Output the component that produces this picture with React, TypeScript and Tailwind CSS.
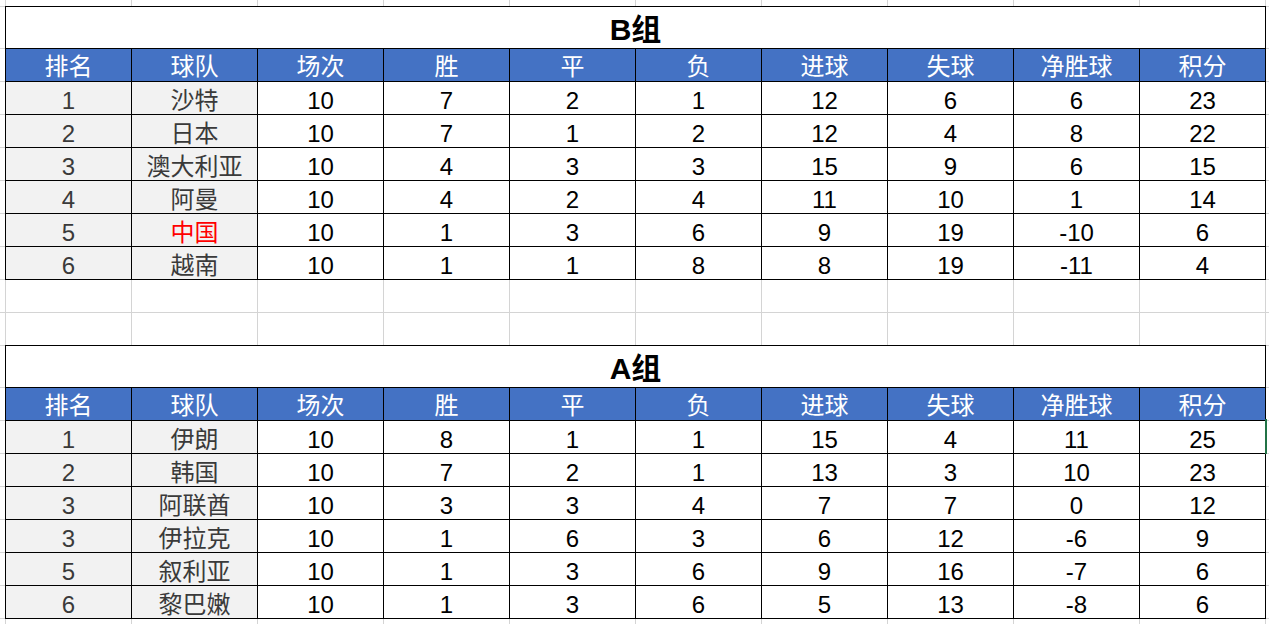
import React from "react";

const HEAD = ["排名", "球队", "场次", "胜", "平", "负", "进球", "失球", "净胜球", "积分"];

type Row = (string | number)[];

const B: Row[] = [
  [1, "沙特", 10, 7, 2, 1, 12, 6, 6, 23],
  [2, "日本", 10, 7, 1, 2, 12, 4, 8, 22],
  [3, "澳大利亚", 10, 4, 3, 3, 15, 9, 6, 15],
  [4, "阿曼", 10, 4, 2, 4, 11, 10, 1, 14],
  [5, "中国", 10, 1, 3, 6, 9, 19, -10, 6],
  [6, "越南", 10, 1, 1, 8, 8, 19, -11, 4],
];

const A: Row[] = [
  [1, "伊朗", 10, 8, 1, 1, 15, 4, 11, 25],
  [2, "韩国", 10, 7, 2, 1, 13, 3, 10, 23],
  [3, "阿联酋", 10, 3, 3, 4, 7, 7, 0, 12],
  [3, "伊拉克", 10, 1, 6, 3, 6, 12, -6, 9],
  [5, "叙利亚", 10, 1, 3, 6, 9, 16, -7, 6],
  [6, "黎巴嫩", 10, 1, 3, 6, 5, 13, -8, 6],
];

const COLS = [0, 1, 2, 3, 4, 5, 6, 7, 8, 9];

function GridBand({ h, bottom }: { h: string; bottom?: boolean }) {
  return (
    <div className={`flex ${h} ${bottom ? "border-b border-[#d4d4d4]" : ""} box-content`}>
      <div className="w-[5px] shrink-0" />
      {COLS.map((i) => (
        <div key={i} className="w-[126px] shrink-0 border-l border-[#d4d4d4]" />
      ))}
      <div className="w-[4px] shrink-0 border-l border-[#d4d4d4]" />
    </div>
  );
}

function SideStrip({ w }: { w: string }) {
  const heights = ["h-[42px]", "h-[33px]", "h-[33px]", "h-[33px]", "h-[33px]", "h-[33px]", "h-[33px]", "h-[33px]"];
  return (
    <div className={`${w} shrink-0 flex flex-col`}>
      {heights.map((hh, i) => (
        <div key={i} className={`${hh} border-t border-[#d4d4d4] ${i === 7 ? "h-[34px] border-b" : ""}`} />
      ))}
    </div>
  );
}

function Table({ title, rows }: { title: string; rows: Row[] }) {
  return (
    <div className="flex">
      <SideStrip w="w-[5px]" />
      <div className="w-[1261px] shrink-0 border border-black flex flex-col">
        <div className="h-[41px] flex items-end justify-center">
          <span className="text-[30px] leading-[36px] font-bold text-black">{title}</span>
        </div>
        <div className="h-[33px] flex border-t border-black bg-[#4472c4]">
          {HEAD.map((t, i) => (
            <div
              key={i}
              className={`${i === 0 ? "w-[125px]" : "w-[126px] border-l border-black"} shrink-0 flex items-center justify-center text-white text-[24px] leading-[28px] pt-[4px]`}
            >
              {t}
            </div>
          ))}
        </div>
        {rows.map((r, ri) => (
          <div key={ri} className="h-[33px] flex border-t border-black">
            {r.map((v, i) => {
              const gray = i < 2;
              const red = v === "中国";
              return (
                <div
                  key={i}
                  className={`${i === 0 ? "w-[125px]" : "w-[126px] border-l border-black"} shrink-0 flex items-center justify-center text-[24px] leading-[28px] pt-[5px] ${
                    gray ? "bg-[#f2f2f2]" : ""
                  } ${red ? "text-[#ff0000]" : gray ? "text-[#3a3a3a]" : "text-black"}`}
                >
                  {v}
                </div>
              );
            })}
          </div>
        ))}
      </div>
      <SideStrip w="w-[3px]" />
    </div>
  );
}

export default function App() {
  return (
    <div
      className="relative w-[1269px] h-[624px] overflow-hidden bg-white"
      style={{ fontFamily: '"Liberation Sans", "Noto Sans CJK SC", sans-serif' }}
    >
      <GridBand h="h-[6px]" />
      <Table title="B组" rows={B} />
      <GridBand h="h-[32px]" bottom />
      <GridBand h="h-[32px]" />
      <Table title="A组" rows={A} />
      <GridBand h="h-[6px]" />
      <div className="absolute left-[1265px] top-[419px] w-[2px] h-[35px] bg-[#217346]" />
    </div>
  );
}
